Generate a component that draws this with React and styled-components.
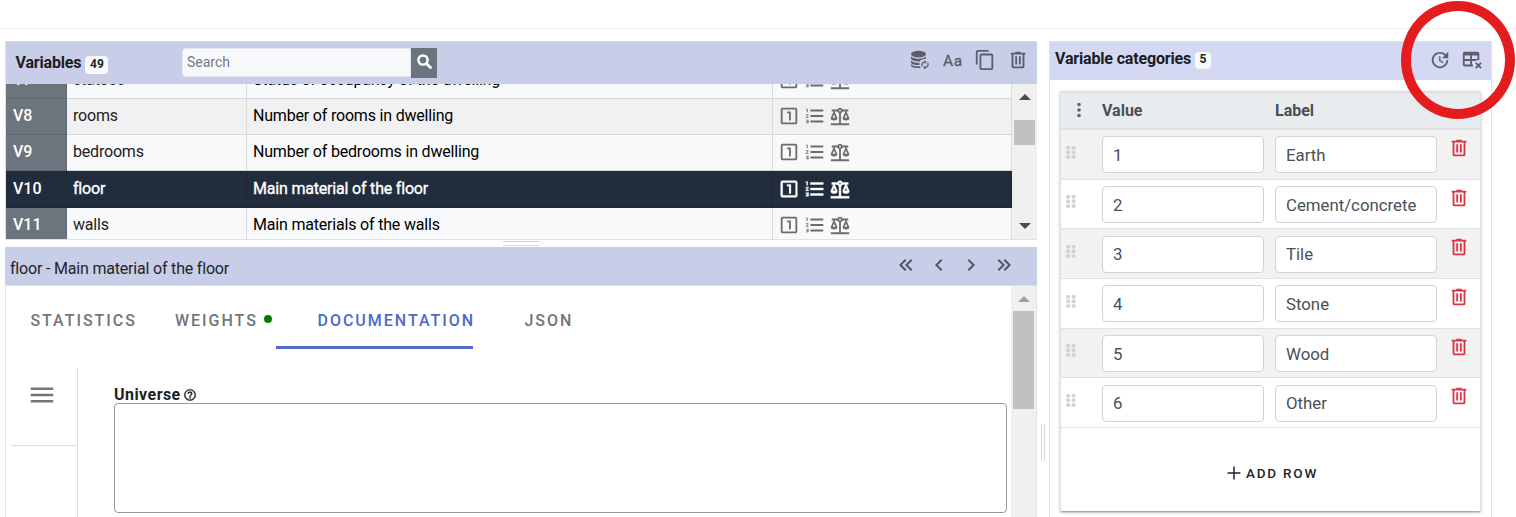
import React from "react";
import styled, { createGlobalStyle, css } from "styled-components";

const Global = createGlobalStyle`
  *, *::before, *::after { box-sizing: border-box; }
  body { margin: 0; background: #fff; font-family: Roboto, "Liberation Sans", sans-serif; font-size: 16px; color: #212529; overflow: hidden; }
  button { border: 0; padding: 0; background: none; font: inherit; color: inherit; }
  input { font: inherit; }
  svg { display: block; flex: none; }
`;

const icons = {
  trash: "M9,3V4H4V6H5V19A2,2 0 0,0 7,21H17A2,2 0 0,0 19,19V6H20V4H15V3H9M7,6H17V19H7V6M9,8V17H11V8H9M13,8V17H15V8H13Z",
  copy: "M19,21H8V7H19M19,5H8A2,2 0 0,0 6,7V21A2,2 0 0,0 8,23H19A2,2 0 0,0 21,21V7A2,2 0 0,0 19,5M16,1H4A2,2 0 0,0 2,3V17H4V3H16V1Z",
  update: "M21,10.12H14.22L16.96,7.3C14.23,4.6 9.81,4.5 7.08,7.2C4.35,9.91 4.35,14.28 7.08,17C9.81,19.7 14.23,19.7 16.96,17C18.32,15.65 19,14.08 19,12.1H21C21,14.08 20.12,16.65 18.36,18.39C14.85,21.87 9.15,21.87 5.64,18.39C2.14,14.92 2.11,9.28 5.62,5.81C9.13,2.34 14.76,2.34 18.27,5.81L21,3V10.12M12.5,8V12.25L16,14.33L15.28,15.54L11,13V8H12.5Z",
  tableRemove: "M15.46,15.88L16.88,14.46L19,16.59L21.12,14.46L22.54,15.88L20.41,18L22.54,20.12L21.12,21.54L19,19.41L16.88,21.54L15.46,20.12L17.59,18L15.46,15.88M4,3H18A2,2 0 0,1 20,5V12.08C18.45,11.82 16.92,12.18 15.68,13H12V17H13.08C12.97,17.68 12.97,18.35 13.08,19H4A2,2 0 0,1 2,17V5A2,2 0 0,1 4,3M4,7V11H10V7H4M12,7V11H18V7H12M4,13V17H10V13H4Z",
  list: "M7,13V11H21V13H7M7,19V17H21V19H7M7,7V5H21V7H7M3,8V5H2V4H4V8H3M2,17V16H5V20H2V19H4V18.5H3V17.5H4V17H2M4.25,10A0.75,0.75 0 0,1 5,10.75C5,10.95 4.92,11.14 4.79,11.27L3.12,13H5V14H2V13.08L4,11H2V10H4.25Z",
  scale: "M12,3C10.73,3 9.6,3.8 9.18,5H3V7H4.95L2,14C1.53,16 3,17 5.5,17C8,17 9.56,16 9,14L6.05,7H9.17C9.5,7.85 10.15,8.5 11,8.83V20H2V22H22V20H13V8.82C13.85,8.5 14.5,7.85 14.82,7H17.95L15,14C14.53,16 16,17 18.5,17C21,17 22.56,16 22,14L19.05,7H21V5H14.83C14.4,3.8 13.27,3 12,3M12,5A1,1 0 0,1 13,6A1,1 0 0,1 12,7A1,1 0 0,1 11,6A1,1 0 0,1 12,5M5.5,10.25L7,14H4L5.5,10.25M18.5,10.25L20,14H17L18.5,10.25Z",
  one: "M12,17H14V7H10V9H12M19,19H5V5H19M19,3H5A2,2 0 0,0 3,5V19A2,2 0 0,0 5,21H19A2,2 0 0,0 21,19V5A2,2 0 0,0 19,3Z",
  first: "M18.41,7.41L17,6L11,12L17,18L18.41,16.59L13.83,12L18.41,7.41M12.41,7.41L11,6L5,12L11,18L12.41,16.59L7.83,12L12.41,7.41Z",
  prev: "M15.41,16.58L10.83,12L15.41,7.41L14,6L8,12L14,18L15.41,16.58Z",
  next: "M8.59,16.58L13.17,12L8.59,7.41L10,6L16,12L10,18L8.59,16.58Z",
  last: "M5.59,7.41L7,6L13,12L7,18L5.59,16.59L10.17,12L5.59,7.41M11.59,7.41L13,6L19,12L13,18L11.59,16.59L16.17,12L11.59,7.41Z",
  menu: "M3,6H21V8H3V6M3,11H21V13H3V11M3,16H21V18H3V16Z",
  dots: "M12,16A2,2 0 0,1 14,18A2,2 0 0,1 12,20A2,2 0 0,1 10,18A2,2 0 0,1 12,16M12,10A2,2 0 0,1 14,12A2,2 0 0,1 12,14A2,2 0 0,1 10,12A2,2 0 0,1 12,10M12,4A2,2 0 0,1 14,6A2,2 0 0,1 12,8A2,2 0 0,1 10,6A2,2 0 0,1 12,4Z",
  plus: "M19,12.8H12.8V19H11.2V12.8H5V11.2H11.2V5H12.8V11.2H19V12.8Z",
  help: "M11,18H13V16H11V18M12,2A10,10 0 0,0 2,12A10,10 0 0,0 12,22A10,10 0 0,0 22,12A10,10 0 0,0 12,2M12,20C7.59,20 4,16.41 4,12C4,7.59 7.59,4 12,4C16.41,4 20,7.59 20,12C20,16.41 16.41,20 12,20M12,6A4,4 0 0,0 8,10H10A2,2 0 0,1 12,8A2,2 0 0,1 14,10C14,12 11,11.75 11,15H13C13,12.75 16,12.5 16,10A4,4 0 0,0 12,6Z",
};

const Icon = ({ name, size = 24 }) => (
  <svg width={size} height={size} viewBox="0 0 24 24" fill="currentColor"><path d={icons[name]} /></svg>
);

const DatabaseIcon = () => (
  <svg width="20" height="20" viewBox="0 0 20 20" fill="currentColor">
    <ellipse cx="8.5" cy="4.2" rx="7.5" ry="3.4" />
    <path d="M1 6.2C2.3 9.5 14.7 9.5 16 6.2V8.8C13 8.7 10.7 9.7 9.8 11.4C5 11.5 1.8 10.6 1 8.9Z" />
    <path d="M1 10.5C2.4 12.3 5.6 12.9 9.4 12.8V15C4.8 15.2 1.7 14.2 1 12.7Z" />
    <path d="M1 14.2C2.6 15.9 5.8 16.4 9.6 16.3L10.8 18C5.5 18.4 1.6 17.6 1 16.1Z" />
    <path d="M12.2 16.2C11.2 13.9 12.6 11.9 14.8 11.9M17.7 12.8C18.8 15 17.5 17.5 15 17.5" fill="none" stroke="currentColor" strokeWidth="1.3" />
    <path d="M14.5 9.9L16.9 11.9L14.5 13.9ZM15.4 15.5L13 17.5L15.4 19.5Z" />
  </svg>
);

const SearchIcon = () => (
  <svg width="15" height="15" viewBox="0 0 14 14" fill="none" stroke="#fff">
    <circle cx="5.6" cy="5.6" r="4.3" strokeWidth="2.3" />
    <path d="M8.8 8.8L12.6 12.6" strokeWidth="2.6" strokeLinecap="round" />
  </svg>
);

const GripIcon = () => (
  <svg width="10" height="13" viewBox="0 0 10 13" fill="#d0d1d2">
    {[0, 4.6, 9.2].map((y) => [0.3, 5.7].map((x) => <rect key={`${x}-${y}`} x={x} y={y} width="3.8" height="3.6" rx="1.1" />))}
  </svg>
);

const Page = styled.div`
  position: relative;
  width: 1516px;
  height: 517px;
  padding-top: 28px;
  overflow: hidden;
`;
const TopRule = styled.div`height: 1px; background: #eeeeee;`;
const Columns = styled.div`display: flex; padding: 12px 0 0 5px; align-items: stretch;`;
const LeftColumn = styled.div`width: 1032px; display: flex; flex-direction: column;`;

const VariablesPanel = styled.section`
  height: 199px;
  border: 1px solid #dee2e6;
  border-right: 0;
  border-top: 1px solid #d5d9e4;
`;
const VariablesHeader = styled.header`
  height: 42px;
  display: flex;
  align-items: center;
  background: #c9cee8;
  padding-left: 9.5px;
`;
const Title = styled.h1`margin: 0; font-size: 16px; line-height: 20px; font-weight: 700; color: #1b1d22; letter-spacing: -0.17px;`;
const Badge = styled.span`
  height: ${(p) => p.$height || 18}px;
  width: ${(p) => p.$width}px;
  text-align: center;
  margin: 3px 0 0 4px;
  border-radius: 4px;
  background: #f8f9fa;
  font-size: 12px;
  line-height: ${(p) => (p.$height || 18) - 2}px;
  font-weight: 700;
  color: #212529;
`;
const Search = styled.div`display: flex; height: 30px; width: 255px; margin: 0 0 1px auto;`;
const SearchInput = styled.input`
  width: 229px;
  height: 29px;
  align-self: center;
  border: 1px solid #e3e5ef;
  border-radius: 4px 0 0 4px;
  background: #f8f9fa;
  padding: 0 4px 1px;
  font-size: 14px;
  &::placeholder { color: #757980; opacity: 1; }
`;
const SearchButton = styled.button`flex: 1; display: grid; place-items: center; background: #6c757d; padding-bottom: 2px;`;
const TitleArea = styled.div`display: flex; align-items: center; width: 421.5px;`;
const HeaderActions = styled.div`display: flex; align-items: center; color: #5c5f6b; margin-left: auto; padding: 0 8px 6px 0;`;
const LetterCase = styled.span`font-size: 15.5px; line-height: 20px; font-weight: 400; letter-spacing: 0.6px; width: 20px; margin: 1px 11px 0 13px; -webkit-text-stroke: 0.35px;`;
const ActionButton = styled.button`margin-left: ${(p) => p.$gap || 0}px;`;

const ListArea = styled.div`display: flex; height: 155px; overflow: hidden;`;
const Rows = styled.div`width: 1006px; margin-top: -22px; height: 190px;`;
const Row = styled.div`
  display: grid;
  grid-template-columns: 61px 180px 526px 239px;
  height: ${(p) => p.$height}px;
  background: ${(p) => (p.$odd ? "#f1f1f1" : "#f8f9fb")};
  color: #212121;
  letter-spacing: -0.19px;
  ${(p) => p.$active && css`background: #212d3d; color: #fff; -webkit-text-stroke: 0.35px;`}
`;
const Cell = styled.div`
  display: flex;
  align-items: center;
  padding: 0 6px ${(p) => (p.$active ? 1 : 2)}px;
  color: ${(p) => (p.$dark ? "#000" : "inherit")};
  border-right: 1px solid ${(p) => (p.$active ? "#1c2634" : "#d9dadc")};
  border-bottom: 1px solid ${(p) => (p.$active ? "#1c2634" : "#d5d6d9")};
`;
const NumberCell = styled(Cell)`
  padding-left: 7px;
  font-weight: 500;
  letter-spacing: 0;
  color: #fff;
  -webkit-text-stroke: 0;
  background: ${(p) => (p.$active ? "#212d3d" : "#6c757d")};
  border-color: ${(p) => (p.$active ? "#1c2634" : "#5f6870")};
`;
const TypeCell = styled(Cell)`
  gap: 3.7px;
  padding: 0 5px 1px;
  color: ${(p) => (p.$active ? "#fff" : "#6b6c6e")};
  svg { stroke: currentColor; stroke-width: ${(p) => (p.$active ? 0.5 : 0)}; }
`;

const Scrollbar = styled.div`
  width: 25px;
  flex: none;
  background: #f0f0f0;
  display: flex;
  flex-direction: column;
  align-items: center;
`;
const ArrowUp = styled.span`
  border: 6px solid transparent;
  border-top: 0;
  border-bottom-color: ${(p) => p.$color || "#4b4b4b"};
  margin-top: ${(p) => p.$top}px;
`;
const ArrowDown = styled.span`border: 6px solid transparent; border-bottom: 0; border-top-color: #4b4b4b; margin: auto 0 10px;`;
const Thumb = styled.span`width: 21px; height: ${(p) => p.$height}px; background: #c1c1c1; margin-top: ${(p) => p.$top}px;`;

const HorizontalSplitter = styled.div`height: 7px; display: flex; justify-content: center; padding: 1px 1px 0 0;`;
const HorizontalHandle = styled.span`width: 36px; height: 5px; border: solid #d6d6d6; border-width: 1px 0;`;
const DetailHeader = styled.header`
  height: 39px;
  background: #c9cee8;
  border-bottom: 1px solid #dcdfe6;
  display: flex;
  align-items: center;
  justify-content: space-between;
  padding: 4px 21px 0 5px;
  letter-spacing: -0.19px;
`;
const Pager = styled.div`display: flex; gap: 8.7px; color: #52555f; padding-bottom: 7px;`;
const DetailBody = styled.div`height: 240px; display: flex; border: solid #dee2e6; border-width: 0 1px;`;
const DetailMain = styled.div`width: 1005px;`;
const Tabs = styled.div`display: flex; height: 63px;`;
const Tab = styled.button`
  width: ${(p) => p.$width}px;
  padding: 8px 0 0 ${(p) => p.$left}px;
  display: flex;
  align-items: center;
  font-size: 16px;
  font-weight: 500;
  letter-spacing: 1.98px;
  white-space: nowrap;
  color: ${(p) => (p.$active ? "#4f69c8" : "#757575")};
  border-bottom: 3px solid ${(p) => (p.$active ? "#526cc8" : "transparent")};
`;
const StatusDot = styled.span`width: 8px; height: 8px; border-radius: 50%; background: #008000; margin: 0 0 3px 6.5px;`;
const DocArea = styled.div`display: flex; padding: 19px 0 0 5px; height: 177px;`;
const MenuRail = styled.div`width: 67px; border-right: 1px solid #dddddd;`;
const MenuButton = styled.button`
  width: 100%;
  height: 78px;
  display: flex;
  padding: 12px 0 0 16px;
  color: #757575;
  border-bottom: 1px solid #dddddd;
`;
const Field = styled.div`padding: 17px 0 0 36px;`;
const FieldLabel = styled.label`
  display: flex;
  align-items: center;
  gap: 2.5px;
  height: 18px;
  font-weight: 700;
  letter-spacing: 0.45px;
  color: #1d1f22;
  svg { margin-top: 2px; stroke: currentColor; stroke-width: 0.5; }
`;
const TextArea = styled.textarea`
  display: block;
  width: 893px;
  height: 110px;
  border: 1px solid #999;
  border-radius: 4px;
  resize: none;
  background: #fff;
`;

const VerticalSplitter = styled.div`width: 12px; padding: 383px 0 0 4px;`;
const VerticalHandle = styled.div`width: 4px; height: 37px; border: solid #d6d6d6; border-width: 0 1px;`;
const CategoriesPanel = styled.section`width: 443px; height: 500px; border: 1px solid #dee2e6;`;
const CategoriesHeader = styled.header`
  height: 38px;
  display: flex;
  align-items: center;
  background: #d4d8f2;
  padding: 0 8.5px 4px 5px;
`;
const CategoryActions = styled.div`display: flex; gap: 10px; margin: 2px 0 0 auto; color: #5c5f6b;`;
const CategoryTable = styled.div`
  width: 421px;
  height: 420px;
  margin: 11px 0 0 10px;
  border: 1px solid #dee2e6;
  border-bottom: 0;
  box-shadow: 0 2px 2px -1px rgba(0,0,0,.38), 0 1px 4px rgba(0,0,0,.18);
`;
const columns = "41px 173px 173px 1fr";
const TableHead = styled.div`
  display: grid;
  grid-template-columns: ${columns};
  align-items: center;
  height: 38px;
  background: #e9ecef;
  border-bottom: 2px solid #dee2e6;
  border-top: 1px solid #dee2e6;
  font-weight: 700;
  color: #495057;
`;
const HeadIcon = styled.span`padding: 0 0 2px 7px; color: #606366;`;
const CategoryRow = styled.div`
  display: grid;
  grid-template-columns: ${columns};
  height: 49.7px;
  padding-top: 6.4px;
  border-bottom: 1px solid #dee2e6;
  background: ${(p) => (p.$odd ? "#f2f2f2" : "#fff")};
`;
const Grip = styled.span`padding: 9.2px 0 0 5px;`;
const CategoryInput = styled.input`
  width: 162px;
  height: 37px;
  border: 1px solid #ced4da;
  border-radius: 4px;
  padding: 0 10px;
  color: #495057;
  background: #fff;
  font-size: 16.8px;
`;
const RemoveButton = styled.button`align-self: start; justify-self: start; color: #dc3545; margin-top: 0.6px;`;
const AddRow = styled.button`
  width: 100%;
  height: 90px;
  display: flex;
  align-items: center;
  justify-content: center;
  gap: 1px;
  font-size: 13.5px;
  font-weight: 500;
  letter-spacing: 1.8px;
  svg { margin-bottom: 1px; }
`;
const Highlight = styled.div`
  position: absolute;
  left: 1401px;
  top: 1px;
  width: 114px;
  height: 118px;
  border: 10.5px solid #e51c1e;
  border-radius: 50%;
`;

const variables = [
  ["V7", "statocc", "Status of occupancy of the dwelling", 37],
  ["V8", "rooms", "Number of rooms in dwelling", 36],
  ["V9", "bedrooms", "Number of bedrooms in dwelling", 36],
  ["V10", "floor", "Main material of the floor", 37],
  ["V11", "walls", "Main materials of the walls", 36],
];
const categories = ["Earth", "Cement/concrete", "Tile", "Stone", "Wood", "Other"];

const VariableRow = ({ data: [id, name, label, height], odd, active }) => (
  <Row $height={height} $odd={odd} $active={active}>
    <NumberCell $active={active}>{id}</NumberCell>
    <Cell $active={active}>{name}</Cell>
    <Cell $active={active} $dark={!active}>{label}</Cell>
    <TypeCell $active={active}><Icon name="one" size={22} /><Icon name="list" size={22} /><Icon name="scale" size={22} /></TypeCell>
  </Row>
);

export default function App() {
  return (
    <Page>
      <Global />
      <TopRule />
      <Columns>
        <LeftColumn>
          <VariablesPanel>
            <VariablesHeader>
              <TitleArea>
                <Title>Variables</Title><Badge $width={23}>49</Badge>
                <Search><SearchInput placeholder="Search" /><SearchButton aria-label="Search"><SearchIcon /></SearchButton></Search>
              </TitleArea>
              <HeaderActions>
                <DatabaseIcon />
                <LetterCase>Aa</LetterCase>
                <ActionButton><Icon name="copy" size={22} /></ActionButton>
                <ActionButton $gap={11}><Icon name="trash" size={22} /></ActionButton>
              </HeaderActions>
            </VariablesHeader>
            <ListArea>
              <Rows>
                {variables.map((v, i) => <VariableRow key={v[0]} data={v} odd={i % 2 === 1} active={v[0] === "V10"} />)}
              </Rows>
              <Scrollbar><ArrowUp $top={10} /><Thumb $top={20} $height={25} /><ArrowDown /></Scrollbar>
            </ListArea>
          </VariablesPanel>
          <HorizontalSplitter><HorizontalHandle /></HorizontalSplitter>
          <DetailHeader>
            <span>floor - Main material of the floor</span>
            <Pager>{["first", "prev", "next", "last"].map((n) => <Icon key={n} name={n} />)}</Pager>
          </DetailHeader>
          <DetailBody>
            <DetailMain>
              <Tabs>
                <Tab $width={145} $left={24.4}>STATISTICS</Tab>
                <Tab $width={125} $left={24}>WEIGHTS<StatusDot /></Tab>
                <Tab $active $width={197} $left={41.5}>DOCUMENTATION</Tab>
                <Tab $width={130} $left={51.5}>JSON</Tab>
              </Tabs>
              <DocArea>
                <MenuRail><MenuButton aria-label="Menu"><Icon name="menu" size={30} /></MenuButton></MenuRail>
                <Field>
                  <FieldLabel>Universe <Icon name="help" size={14} /></FieldLabel>
                  <TextArea />
                </Field>
              </DocArea>
            </DetailMain>
            <Scrollbar><ArrowUp $top={10} $color="#a3a3a3" /><Thumb $top={9} $height={98} /></Scrollbar>
          </DetailBody>
        </LeftColumn>
        <VerticalSplitter><VerticalHandle /></VerticalSplitter>
        <CategoriesPanel>
          <CategoriesHeader>
            <Title>Variable categories</Title><Badge $width={16} $height={17}>5</Badge>
            <CategoryActions><Icon name="update" size={22} /><Icon name="tableRemove" size={22} /></CategoryActions>
          </CategoriesHeader>
          <CategoryTable>
            <TableHead><HeadIcon><Icon name="dots" size={22} /></HeadIcon><span>Value</span><span>Label</span></TableHead>
            {categories.map((c, i) => (
              <CategoryRow key={c} $odd={i % 2 === 0}>
                <Grip><GripIcon /></Grip>
                <CategoryInput defaultValue={i + 1} />
                <CategoryInput defaultValue={c} />
                <RemoveButton aria-label="Remove"><Icon name="trash" size={22} /></RemoveButton>
              </CategoryRow>
            ))}
            <AddRow><Icon name="plus" size={22} />ADD ROW</AddRow>
          </CategoryTable>
        </CategoriesPanel>
      </Columns>
      <Highlight />
    </Page>
  );
}
